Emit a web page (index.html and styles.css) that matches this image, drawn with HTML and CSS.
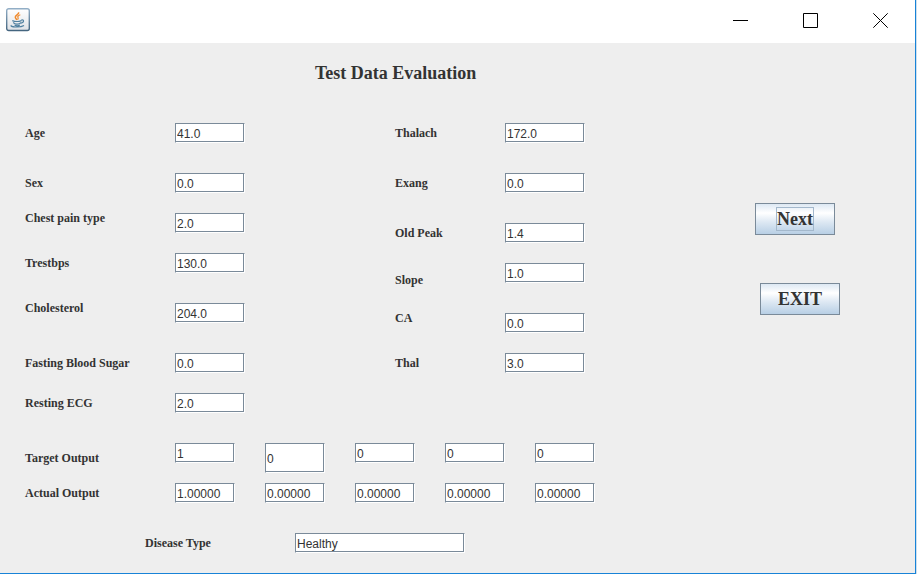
FILE: index.html
```
<!DOCTYPE html>
<html lang="en">
<head>
<meta charset="utf-8">
<title>Test Data Evaluation</title>
<link rel="stylesheet" href="styles.css">
</head>
<body>
<div class="window">
  <header class="titlebar">
    <svg class="app-icon" width="24" height="24" viewBox="0 0 24 24" aria-hidden="true">
      <defs>
        <linearGradient id="tile" x1="0" y1="0" x2="0" y2="1"><stop offset="0" stop-color="#fff"/><stop offset="1" stop-color="#dfe2e6"/></linearGradient>
        <linearGradient id="rim" x1="0" y1="0" x2="0" y2="1"><stop offset="0" stop-color="#92aec6"/><stop offset="1" stop-color="#44657f"/></linearGradient>
      </defs>
      <rect x=".7" y=".7" width="22.6" height="21.8" rx="2" fill="url(#tile)" stroke="url(#rim)" stroke-width="1.4"/>
      <path d="M12.600 4.200c.8 2-3.500 3-3.300 5 .1 1.200 1.300 1.800 1.700 2.800" fill="none" stroke="#f08a2c" stroke-width="1.500"/>
      <path d="M14.300 6.800c-2 .7-3 1.500-2.300 2.800.4.800.1 1.500-.4 2" fill="none" stroke="#f08a2c" stroke-width="1.200"/>
      <path d="M6.300 12.600c2.500 1 6.500 1 9.200 0M7.500 14.200c.3 2.600 6.500 2.600 7.300.2M15.300 12c3-.9 3 2.700-.3 3.100M8.600 17.300c1.500.6 3.700.6 5.200 0M5.500 17.200c-3 2 9 2.600 12.500.4" fill="none" stroke="#4f7f9f" stroke-width="1.200"/>
    </svg>
    <div class="window-controls">
      <button class="control" aria-label="Minimize"><svg width="15" height="15" viewBox="0 0 15 15"><path d="M0 7.500h15"/></svg></button>
      <button class="control" aria-label="Maximize"><svg width="15" height="15" viewBox="0 0 15 15"><path d="M.5.5h14v14H.5z"/></svg></button>
      <button class="control" aria-label="Close"><svg width="15" height="15" viewBox="0 0 15 15"><path d="M.3.300l14.400 14.400M14.700.300L.3 14.700"/></svg></button>
    </div>
  </header>
  <main class="content">
    <h1 class="title">Test Data Evaluation</h1>
    <div class="form">
      <div class="column">
        <div class="row space-large"><label for="age">Age</label><input id="age" value="41.0"></div>
        <div class="row space-small"><label for="sex">Sex</label><input id="sex" value="0.0"></div>
        <div class="row space-small"><label class="raised" for="chest">Chest pain type</label><input id="chest" value="2.0"></div>
        <div class="row space-large"><label for="trestbps">Trestbps</label><input id="trestbps" value="130.0"></div>
        <div class="row space-large"><label class="raised" for="chol">Cholesterol</label><input id="chol" value="204.0"></div>
        <div class="row space-small"><label for="fbs">Fasting Blood Sugar</label><input id="fbs" value="0.0"></div>
        <div class="row"><label for="ecg">Resting ECG</label><input id="ecg" value="2.0"></div>
      </div>
      <div class="column column-right">
        <div class="row space-large"><label for="thalach">Thalach</label><input id="thalach" value="172.0"></div>
        <div class="row space-large"><label for="exang">Exang</label><input id="exang" value="0.0"></div>
        <div class="row space-small"><label for="peak">Old Peak</label><input id="peak" value="1.4"></div>
        <div class="row row-tall"><label for="slope">Slope</label><input id="slope" value="1.0"></div>
        <div class="row space-small"><label class="raised" for="ca">CA</label><input id="ca" value="0.0"></div>
        <div class="row"><label for="thal">Thal</label><input id="thal" value="3.0"></div>
      </div>
      <div class="actions">
        <button class="action action-next"><span class="focus">Next</span></button>
        <button class="action action-exit">EXIT</button>
      </div>
    </div>
    <div class="outputs" role="group" aria-labelledby="target">
      <span class="label" id="target">Target Output</span>
      <input aria-label="Target output 1" value="1">
      <input class="tall" aria-label="Target output 2" value="0">
      <input aria-label="Target output 3" value="0">
      <input aria-label="Target output 4" value="0">
      <input aria-label="Target output 5" value="0">
    </div>
    <div class="outputs" role="group" aria-labelledby="actual">
      <span class="label" id="actual">Actual Output</span>
      <input aria-label="Actual output 1" value="1.00000">
      <input aria-label="Actual output 2" value="0.00000">
      <input aria-label="Actual output 3" value="0.00000">
      <input aria-label="Actual output 4" value="0.00000">
      <input aria-label="Actual output 5" value="0.00000">
    </div>
    <div class="disease"><label for="disease">Disease Type</label><input id="disease" value="Healthy"></div>
  </main>
</div>
</body>
</html>
```

FILE: styles.css
```
* { box-sizing: border-box; }

body {
  margin: 0;
  background: #cfe0ee;
  color: #333;
  font: bold 12px/20px "Liberation Serif", serif;
}

.window {
  display: flex;
  flex-direction: column;
  min-height: 100vh;
  margin-right: 1px;
  border: solid #1883d7;
  border-width: 0 1px 1px 0;
  background: #eee;
}

.titlebar {
  display: flex;
  justify-content: space-between;
  align-items: center;
  height: 43px;
  padding: 0 0 3px 6px;
  background: #fff;
}

.window-controls { display: flex; }

.control {
  display: grid;
  place-items: center;
  width: 70px;
  height: 40px;
  padding: 0;
  border: 0;
  background: none;
}

.control path { fill: none; stroke: #000; }

.content { padding: 20px 0 20px 25px; }

.title {
  margin: 0 0 40px 290px;
  font-size: 18px;
  line-height: 20px;
}

.form { display: flex; }

.column { width: 220px; }

.column-right { width: 190px; margin-left: 150px; }

.row { display: flex; justify-content: space-between; }

.space-small { margin-bottom: 20px; }
.space-large { margin-bottom: 30px; }

.row-tall { height: 34px; margin-bottom: 16px; }
.row-tall label { align-self: center; margin-top: 0; }

.raised { line-height: 10px; }

input {
  width: 70px;
  height: 20px;
  padding: 2px 1px 0;
  border: 1px solid #7a8a99;
  border-right-color: #fff;
  border-bottom-color: #fff;
  border-radius: 0;
  background: #fff;
  box-shadow: inset -1px -1px #7a8a99;
  color: #333;
  font: 12px "Liberation Sans", sans-serif;
}

.column-right input { width: 80px; }

.actions {
  display: flex;
  flex-direction: column;
  gap: 48px;
  margin: 80px 0 0 170px;
}

.action {
  width: 80px;
  height: 32px;
  padding: 0;
  border: 1px solid #7a8a99;
  background: linear-gradient(#dde8f3 0%, #fff 30%, #dde8f3 60%, #b8cfe5 100%);
  color: #333;
  font: bold 18px/22px "Liberation Serif", serif;
}

.action-exit { margin-left: 5px; }

.focus { display: inline-block; border: 1px solid #a3b8cc; }

.outputs {
  display: flex;
  align-items: flex-start;
  gap: 30px;
  margin-top: 10px;
}

.form + .outputs { margin-top: 30px; }

.label { width: 120px; align-self: center; }

.outputs input { width: 60px; }

.outputs .tall { height: 30px; }

.disease {
  display: flex;
  margin: 30px 0 0 120px;
}

.disease label { width: 150px; }
.disease input { width: 170px; }
```
